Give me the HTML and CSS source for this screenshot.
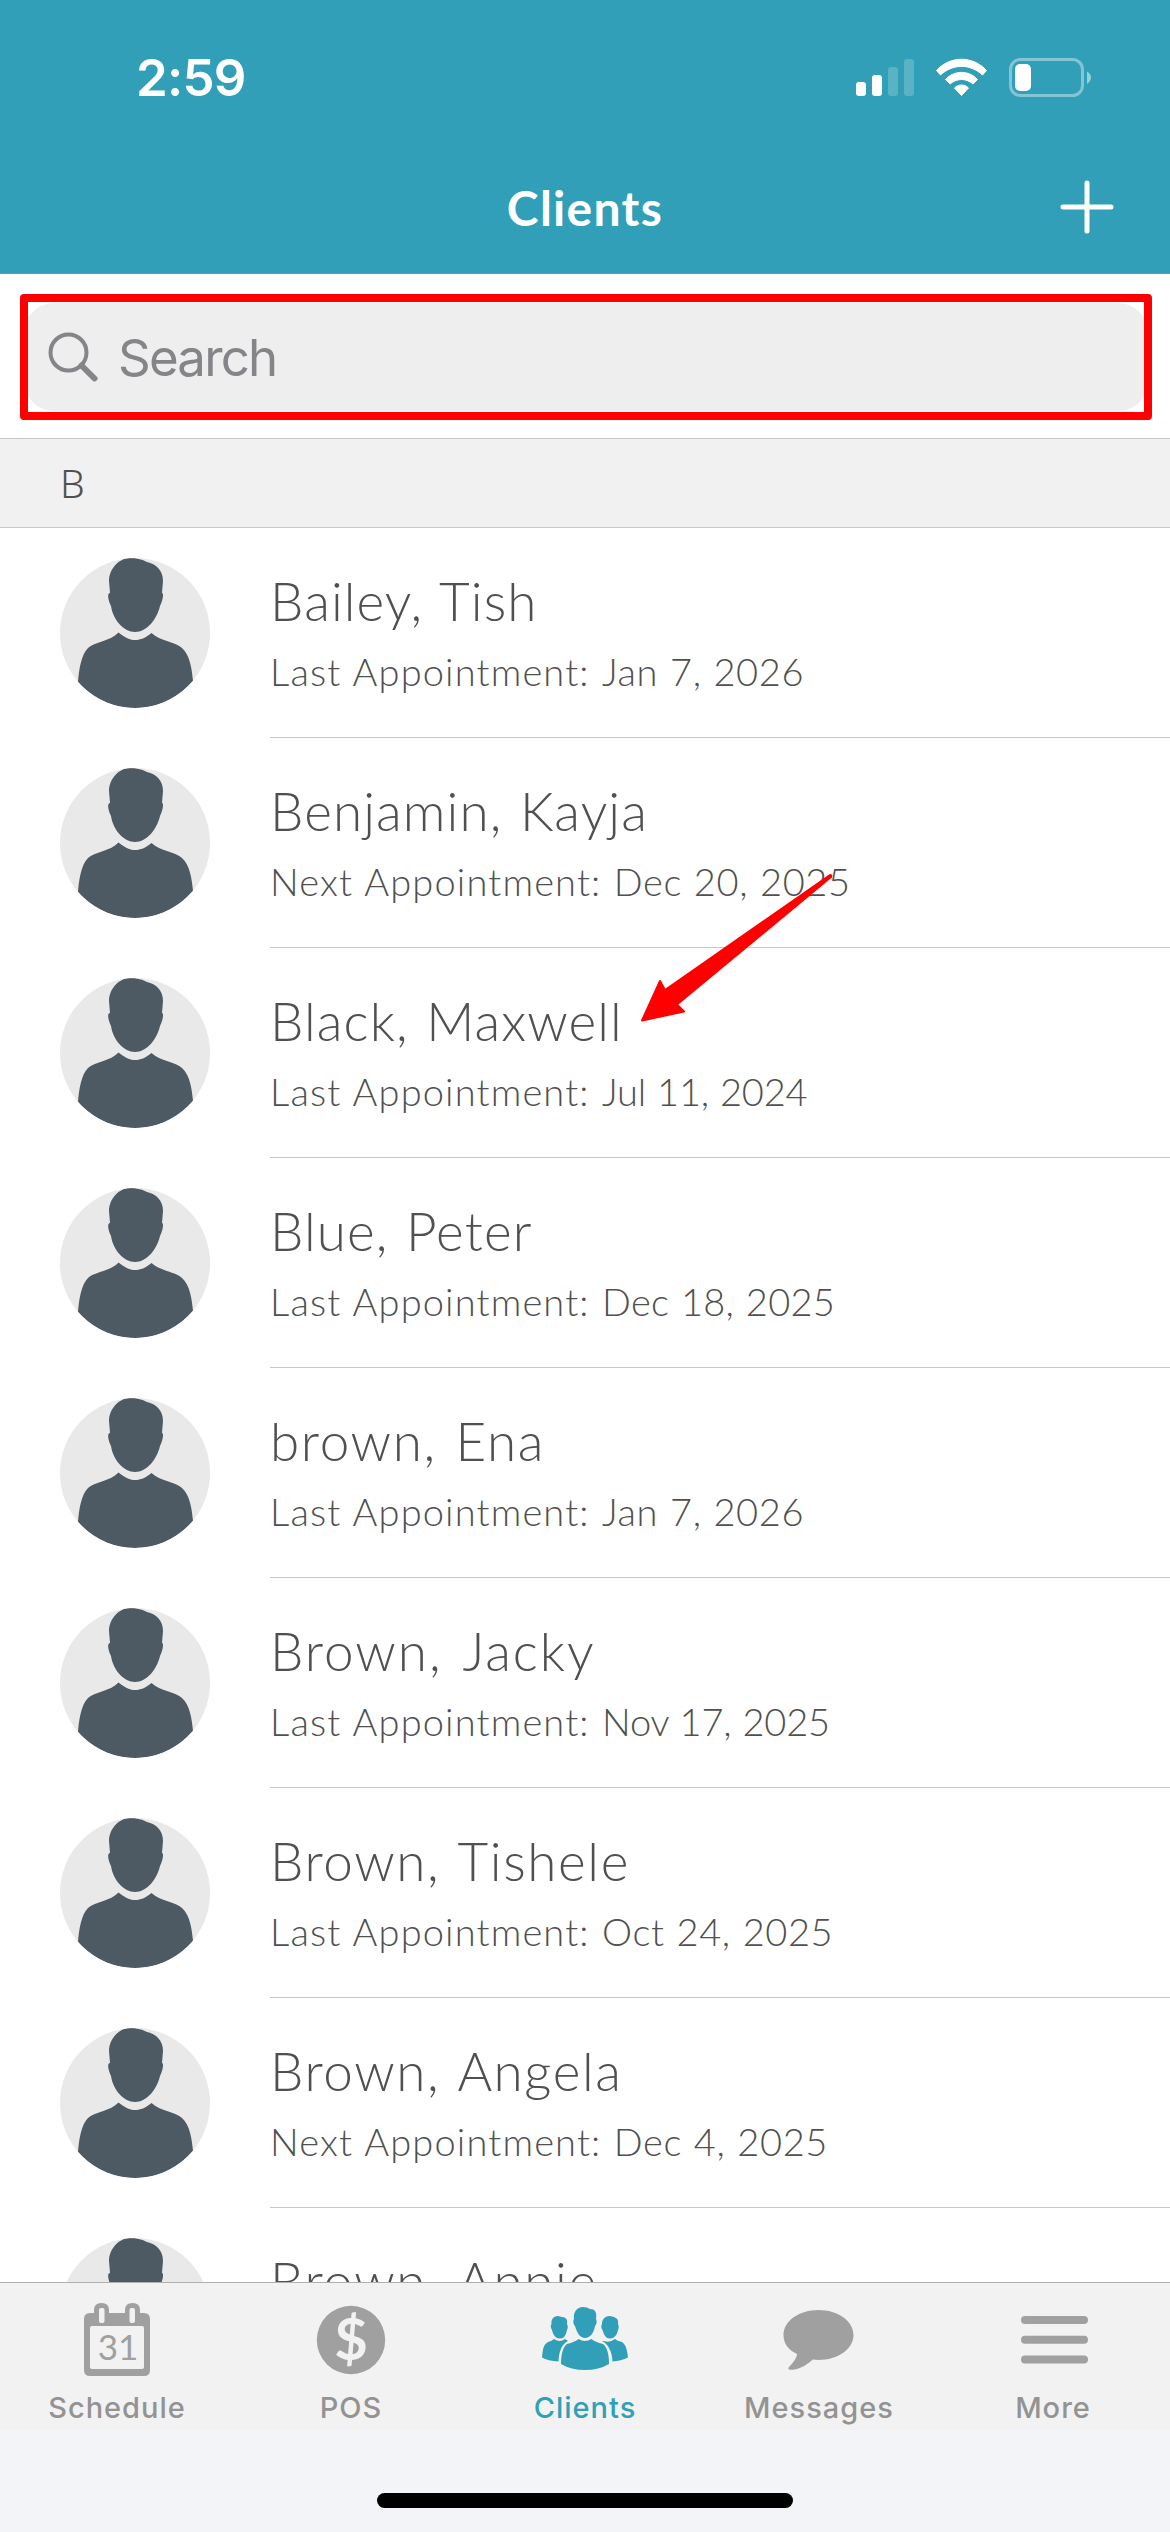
FILE: index.html
```html
<!DOCTYPE html>
<html lang="en">
<head>
<meta charset="utf-8">
<title>Clients</title>
<link rel="stylesheet" href="styles.css">
</head>
<body>
<svg class="defs" width="0" height="0" aria-hidden="true">
  <defs>
    <clipPath id="disc"><circle cx="75" cy="75" r="75"/></clipPath>
    <symbol id="avatar" viewBox="0 0 150 150">
      <circle cx="75" cy="75" r="75" fill="#e9e9e9"/>
      <g fill="#4d5963" clip-path="url(#disc)">
        <path d="M70 0C59 0 49 11 49 23L50 35C47 35 48 42 51 48C53 62 64 74 75 74C87 74 97 61 100 48C103 42 104 35 102 35L103 23C103 12 96 6 87 4C81 1 76 0 70 0Z"/>
        <path d="M58.500 74.500C66 80 69 82 75 82C81 82 85 80 91.500 75C100 83 116 84 122 90C130 97 132 112 133 123C118 140 98 150 75 150C52 150 32 140 18 124C19 112 21 97 28 90C34 84 51 83 58.500 74.500Z"/>
      </g>
    </symbol>
  </defs>
</svg>
<div class="screen">
  <header class="header">
    <div class="status">
      <span class="time">2:59</span>
      <svg class="status-icons" width="240" height="44" viewBox="0 0 240 44" fill="#fff">
        <rect x="4" y="26" width="10" height="14" rx="3"/>
        <rect x="20" y="19" width="10" height="21" rx="3"/>
        <rect x="36" y="11" width="10" height="29" rx="3" opacity=".2"/>
        <rect x="52" y="3" width="10" height="37" rx="3" opacity=".2"/>
        <path d="M84.500 14.500C98 -.5 121 -.5 134.500 14.500L130.500 19C118 7.500 101 7.500 88.500 19Z" stroke="#fff" stroke-linejoin="round" stroke-width="1"/>
        <path d="M93.500 23.500C102 14 117 14 125.500 23.500L121 28C114 22 105 22 98 28Z" stroke="#fff" stroke-linejoin="round" stroke-width="1"/>
        <path d="M102.500 32C106 28 113 28 116.500 32L109.500 39.500Z" stroke="#fff" stroke-linejoin="round" stroke-width="1"/>
        <rect x="158.500" y="3.500" width="72" height="36" rx="10" fill="none" stroke="#fff" stroke-width="3" opacity=".4"/>
        <rect x="163" y="8" width="16" height="27" rx="5"/>
        <path d="M235 15.500Q239 18 239 21.500T235 28Z" opacity=".5"/>
      </svg>
    </div>
    <div class="titlebar">
      <h1 class="title">Clients</h1>
      <svg class="plus" width="54" height="54" viewBox="0 0 54 54" stroke="#fff" stroke-width="5" stroke-linecap="round"><path d="M27 3V51M3 27H51"/></svg>
    </div>
  </header>
  <div class="searchbar">
    <div class="highlight"><div class="search">
      <svg width="50" height="50" viewBox="0 0 50 50" fill="none" stroke="#858589"><circle cx="20.500" cy="20.500" r="18" stroke-width="4"/><path d="M33.500 33.500L46.500 46.500" stroke-width="6" stroke-linecap="round"/></svg>
      <span class="placeholder">Search</span>
    </div></div>
  </div>
  <div class="section">B</div>
  <main class="list">
    <div class="row"><svg class="avatar"><use href="#avatar"/></svg><div class="info"><div class="name">Bailey, Tish</div><div class="appt">Last Appointment: <span class="date">Jan 7, 2026</span></div></div></div>
    <div class="row"><svg class="avatar"><use href="#avatar"/></svg><div class="info"><div class="name">Benjamin, Kayja</div><div class="appt">Next Appointment: <span class="date">Dec 20, 2025</span></div></div></div>
    <div class="row"><svg class="avatar"><use href="#avatar"/></svg><div class="info"><div class="name">Black, Maxwell</div><div class="appt">Last Appointment: <span class="date tight">Jul 11, 2024</span></div></div></div>
    <div class="row"><svg class="avatar"><use href="#avatar"/></svg><div class="info"><div class="name">Blue, Peter</div><div class="appt">Last Appointment: <span class="date snug">Dec 18, 2025</span></div></div></div>
    <div class="row"><svg class="avatar"><use href="#avatar"/></svg><div class="info"><div class="name wide">brown, Ena</div><div class="appt">Last Appointment: <span class="date">Jan 7, 2026</span></div></div></div>
    <div class="row"><svg class="avatar"><use href="#avatar"/></svg><div class="info"><div class="name wider">Brown, Jacky</div><div class="appt">Last Appointment: <span class="date tight">Nov 17, 2025</span></div></div></div>
    <div class="row"><svg class="avatar"><use href="#avatar"/></svg><div class="info"><div class="name wide">Brown, Tishele</div><div class="appt">Last Appointment: <span class="date">Oct 24, 2025</span></div></div></div>
    <div class="row"><svg class="avatar"><use href="#avatar"/></svg><div class="info"><div class="name wide">Brown, Angela</div><div class="appt">Next Appointment: <span class="date">Dec 4, 2025</span></div></div></div>
    <div class="row"><svg class="avatar"><use href="#avatar"/></svg><div class="info"><div class="name wide">Brown, Annie</div></div></div>
  </main>
  <nav class="tabs">
    <div class="tab">
      <svg width="90" height="80" viewBox="0 0 90 80">
        <path d="M18 13H22V10Q22 3 29.500 3T37 10V13H53V10Q53 3 60.500 3T68 10V13H72Q78 13 78 19V70Q78 76 72 76H18Q12 76 12 70V19Q12 13 18 13Z" fill="#a0a0a0"/>
        <rect x="27" y="8" width="5.500" height="15" rx="2" fill="#f2f2f2"/><rect x="57.500" y="8" width="5.500" height="15" rx="2" fill="#f2f2f2"/>
        <rect x="18" y="26" width="54" height="43" rx="2" fill="#f2f2f2"/>
        <text class="day" x="46" y="60" text-anchor="middle">31</text>
      </svg>
      <span>Schedule</span>
    </div>
    <div class="tab">
      <svg width="90" height="80" viewBox="0 0 90 80"><circle cx="45" cy="40" r="34.200" fill="#a0a0a0"/><text class="dollar" x="45" y="60" text-anchor="middle">$</text></svg>
      <span>POS</span>
    </div>
    <div class="tab active">
      <svg width="90" height="80" viewBox="0 0 90 80" fill="#319fb7">
        <path d="M18 16C13 16 11 20 11.500 24C10 26 11 28 12 30C13 35 16 38.500 20 38.500C24 38.500 26 35 27 30C28 28 28 26 27 24C28 20 26 17 22 17Z"/><path d="M14 39Q20 43 25 39L28 41C22 44 19 51 18.500 61.500Q8 61 2 57.500C3 49 3 45 8 42Q12 41 14 39Z"/>
        <path d="M70 16C65 16 62 19 62 24C61 26 61 28 62.500 30C64 35 66 38.500 70 38.500C74 38.500 77 35 78 30C79 28 79 26 78 24C79 19 76 17 70 16ZM64 41Q70 43 75 39Q77 41 82 42C86 45 87 49 88 57.500Q81 61 72.500 61.500C72 51 68 44 62 41Z"/>
        <path d="M43 7C37 7 33 12 34 19C33 20 33 24 35 26C37 33 40 38 45 38C50 38 54 33 55 26C57 24 57 20 56 19C57 12 55 9 50 9Q47 7 43 7ZM38.500 39Q45 43 51.500 39Q55 42 63 44C67 47 69 54 69 64Q59 70 45 70Q31 70 21 64C21 54 23 47 27 44Q35 42 38.500 39Z"/>
      </svg>
      <span>Clients</span>
    </div>
    <div class="tab">
      <svg width="90" height="80" viewBox="0 0 90 80" fill="#a0a0a0"><path d="M44.500 10C64 10 79.500 21 79.500 35S64 60 44.500 60L39 59.500C34 64 24 71 15.500 69.500Q13 69 15.500 66.500C20 62 23 57 23 54C14 50 9.500 43 9.500 35C9.500 21 25 10 44.500 10Z"/></svg>
      <span>Messages</span>
    </div>
    <div class="tab">
      <svg width="90" height="80" viewBox="0 0 90 80" fill="#a0a0a0"><rect x="13" y="16" width="67" height="8" rx="4"/><rect x="13" y="35.700" width="67" height="8" rx="4"/><rect x="13" y="55.400" width="67" height="8" rx="4"/></svg>
      <span>More</span>
    </div>
  </nav>
  <footer class="home"><div class="indicator"></div></footer>
  <svg class="arrow" width="194" height="152" viewBox="0 0 194 152" fill="#f00" stroke="#f00" stroke-width="2" stroke-linejoin="round"><path d="M3 149.500L21 110L26 119L191 4Q193 4 192 6L38 133.500L45 140.500Z"/></svg>
</div>
</body>
</html>
```
FILE: styles.css
```css
* { box-sizing: border-box; }
body { margin: 0; }
.defs { position: absolute; }
.screen {
  position: relative;
  display: flex;
  flex-direction: column;
  width: 1170px;
  height: 2532px;
  overflow: hidden;
  background: #fff;
  color: #505050;
  font-family: Lato, sans-serif;
}
.header {
  height: 274px;
  flex: none;
  background: #319fb7;
  border-bottom: 1px solid #7d9298;
  color: #fff;
}
.status {
  display: flex;
  justify-content: space-between;
  align-items: center;
  height: 156px;
  padding: 0 78px 0 136px;
}
.time { font: 600 51px/60px Inter, sans-serif; letter-spacing: -0.8px; }
.titlebar {
  display: grid;
  grid-template-columns: 1fr auto 1fr;
  align-items: center;
  height: 102px;
  padding: 0 56px;
}
.title { grid-column: 2; margin: 0; padding-top: 2px; font-weight: 700; font-size: 48px; line-height: 60px; letter-spacing: 1.3px; }
.plus { justify-self: end; }
.searchbar { height: 164px; flex: none; padding: 20px 18px 0 20px; }
.highlight { height: 126px; border: 8px solid #f00; border-radius: 4px; padding: 1px 0; overflow: hidden; }
.search {
  display: flex;
  align-items: center;
  gap: 20px;
  height: 108px;
  margin: 0 -4px;
  padding-left: 24px;
  border-radius: 30px;
  background: #eee;
}
.placeholder { font: 400 51px/60px Inter, sans-serif; letter-spacing: -1.8px; padding-top: 1px; color: #858589; }
.section {
  height: 90px;
  flex: none;
  padding-left: 60px;
  border: solid #c8c8c8;
  border-width: 1px 0;
  background: #f1f1f1;
  font: 300 39px/88px "Noto Sans", sans-serif;
}
.list { flex: 1; min-height: 0; overflow: hidden; }
.row { display: flex; height: 210px; padding-left: 60px; gap: 60px; }
.avatar { width: 150px; height: 150px; margin-top: 30px; flex: none; }
.info { flex: 1; padding-top: 40px; border-bottom: 1px solid #c8c8c8; white-space: nowrap; }
.name { font-weight: 300; font-size: 53px; line-height: 66px; letter-spacing: 1.1px; word-spacing: 2px; }
.wide { letter-spacing: 1.6px; word-spacing: 3px; }
.wider { letter-spacing: 2px; word-spacing: 5px; }
.appt { font-weight: 300; font-size: 38px; line-height: 50px; margin-top: 12px; letter-spacing: 1.15px; word-spacing: 1px; }
.date { letter-spacing: 0.6px; }
.snug { letter-spacing: 0.3px; }
.tight { letter-spacing: -0.2px; }
.tabs { display: flex; height: 148px; flex: none; border-top: 1px solid #b0b0b0; background: #f2f2f2; }
.tab {
  flex: 1;
  display: flex;
  flex-direction: column;
  align-items: center;
  padding-top: 17px;
  color: #939393;
  font: 500 29px/40px Inter, sans-serif;
  letter-spacing: 1px;
}
.tab span { margin-top: 8px; }
.active { color: #319fb7; }
.day { font: 400 35px Lato, sans-serif; fill: #a0a0a0; letter-spacing: 0; }
.dollar { font: 700 58px Lato, sans-serif; fill: #f2f2f2; letter-spacing: 0; }
.home { display: flex; justify-content: center; align-items: flex-start; height: 102px; flex: none; padding-top: 63px; background: #f3f4f7; }
.indicator { width: 416px; height: 15px; border-radius: 8px; background: #000; }
.arrow { position: absolute; left: 639px; top: 871px; }
```
